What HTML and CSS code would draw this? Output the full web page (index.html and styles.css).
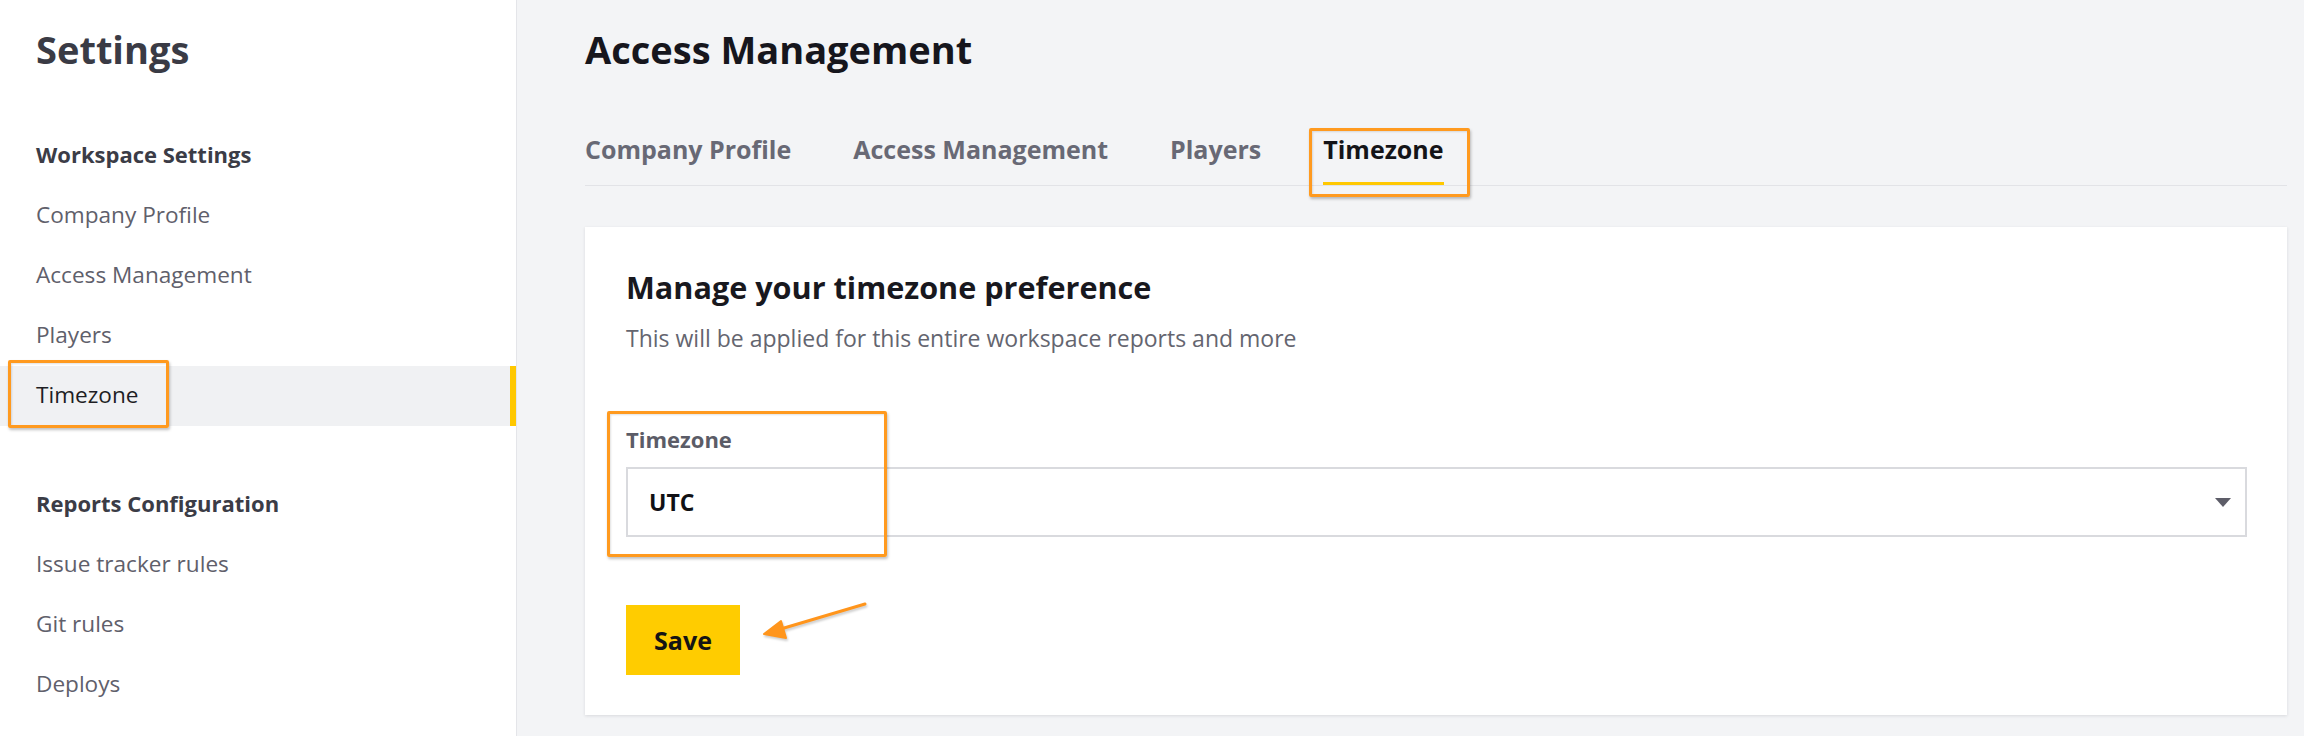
FILE: index.html
```html
<!DOCTYPE html>
<html lang="en">
<head>
<meta charset="utf-8">
<title>Settings – Timezone</title>
<link rel="stylesheet" href="styles.css">
</head>
<body>
<div class="app">
  <aside class="sidebar">
    <h1 class="sidebar-title">Settings</h1>
    <div class="nav-group">
      <div class="nav-heading">Workspace Settings</div>
      <a class="nav-item">Company Profile</a>
      <a class="nav-item">Access Management</a>
      <a class="nav-item">Players</a>
      <a class="nav-item active">Timezone</a>
    </div>
    <div class="nav-group second">
      <div class="nav-heading">Reports Configuration</div>
      <a class="nav-item">Issue tracker rules</a>
      <a class="nav-item">Git rules</a>
      <a class="nav-item">Deploys</a>
    </div>
  </aside>

  <main class="content">
    <h2 class="page-title">Access Management</h2>
    <nav class="tabs">
      <a class="tab">Company Profile</a>
      <a class="tab">Access Management</a>
      <a class="tab">Players</a>
      <a class="tab active">Timezone</a>
    </nav>

    <section class="card">
      <h3 class="card-title">Manage your timezone preference</h3>
      <p class="card-sub">This will be applied for this entire workspace reports and more</p>

      <label class="field-label">Timezone</label>
      <div class="select">
        <span class="select-value">UTC</span>
        <span class="select-caret"></span>
      </div>

      <button class="btn-save">Save</button>
    </section>
  </main>
</div>

<!-- callouts drawn over the page -->
<div class="callout callout-nav"></div>
<div class="callout callout-tab"></div>
<div class="callout callout-field"></div>
<svg class="callout-arrow" width="2304" height="736" viewBox="0 0 2304 736">
  <line x1="865" y1="604" x2="774" y2="631" stroke="#ff951c" stroke-width="3" stroke-linecap="round"/>
  <polygon points="764,634 781,621 786,638" fill="#ff951c" stroke="#ff951c" stroke-width="2" stroke-linejoin="round"/>
</svg>
</body>
</html>
```

FILE: styles.css
```css
* {
  box-sizing: border-box;
}

html, body {
  margin: 0;
  padding: 0;
}

body {
  position: relative;
  width: 2304px;
  height: 736px;
  overflow: hidden;
  font-family: "Open Sans", "Noto Sans", "Liberation Sans", sans-serif;
  background: #f3f4f6;
}

.app {
  display: flex;
  height: 736px;
}

/* ---------- sidebar ---------- */
.sidebar {
  width: 517px;
  flex: none;
  background: #ffffff;
  border-right: 1px solid #e4e5e9;
  padding-top: 25px;
}

.sidebar-title {
  margin: 0 0 0 36px;
  font-size: 38px;
  line-height: 48px;
  font-weight: 700;
  color: #3a3b45;
}

.nav-group {
  margin-top: 61px;
}

.nav-group.second {
  margin-top: 57px;
}

.nav-heading {
  padding-left: 36px;
  font-size: 22px;
  line-height: 40px;
  font-weight: 700;
  color: #3b3c46;
  margin-bottom: 12px;
}

.nav-item {
  display: block;
  height: 60px;
  line-height: 57px;
  padding-left: 36px;
  font-size: 22.6px;
  color: #5f606b;
  cursor: pointer;
}

.nav-item.active {
  background: #f0f1f3;
  color: #1e1e24;
  box-shadow: inset -6px 0 0 #ffc800;
}

/* ---------- main ---------- */
.content {
  flex: 1;
  padding: 27px 17px 0 68px;
}

.page-title {
  margin: 0;
  font-size: 38px;
  line-height: 44px;
  font-weight: 700;
  color: #16161d;
}

.tabs {
  display: flex;
  gap: 62px;
  margin-top: 63px;
  border-bottom: 1px solid #e2e3e7;
}

.tab {
  font-size: 25px;
  line-height: 30px;
  font-weight: 700;
  color: #686975;
  padding-bottom: 18px;
  border-bottom: 3px solid transparent;
  cursor: pointer;
}

.tab.active {
  color: #141418;
  border-bottom-color: #ffc800;
}

.card {
  margin-top: 41px;
  background: #ffffff;
  box-shadow: 0 1px 3px rgba(30, 35, 50, 0.12);
  padding: 41px 40px 40px 41px;
}

.card-title {
  margin: 0;
  font-size: 30.6px;
  line-height: 38px;
  font-weight: 700;
  color: #18181e;
}

.card-sub {
  margin: 17px 0 0;
  font-size: 23px;
  line-height: 30px;
  color: #64656f;
}

.field-label {
  display: block;
  margin-top: 71px;
  font-size: 22px;
  line-height: 30px;
  font-weight: 700;
  color: #5b5c67;
}

.select {
  margin-top: 13px;
  height: 70px;
  border: 2px solid #d9dade;
  display: flex;
  align-items: center;
  justify-content: space-between;
  padding: 0 14px 0 21px;
}

.select-value {
  font-size: 23px;
  font-weight: 700;
  color: #111115;
}

.select-caret {
  width: 0;
  height: 0;
  border-left: 8px solid transparent;
  border-right: 8px solid transparent;
  border-top: 9px solid #5d5d68;
}

.btn-save {
  display: block;
  margin-top: 68px;
  width: 114px;
  height: 70px;
  border: none;
  background: #ffcc00;
  font-family: inherit;
  font-size: 25px;
  font-weight: 700;
  color: #141414;
  cursor: pointer;
}

/* ---------- callouts ---------- */
.callout {
  position: absolute;
  border: 3px solid #ff9a1f;
  border-radius: 2px;
  box-shadow: 1px 2px 3px rgba(0, 0, 0, 0.25), inset 1px 1px 2px rgba(0, 0, 0, 0.12);
}

.callout-nav {
  left: 8px;
  top: 360px;
  width: 161px;
  height: 68px;
}

.callout-tab {
  left: 1309px;
  top: 128px;
  width: 161px;
  height: 69px;
}

.callout-field {
  left: 607px;
  top: 411px;
  width: 280px;
  height: 146px;
}

.callout-arrow {
  position: absolute;
  left: 0;
  top: 0;
  pointer-events: none;
  filter: drop-shadow(1px 2px 1px rgba(0, 0, 0, 0.2));
}
```
